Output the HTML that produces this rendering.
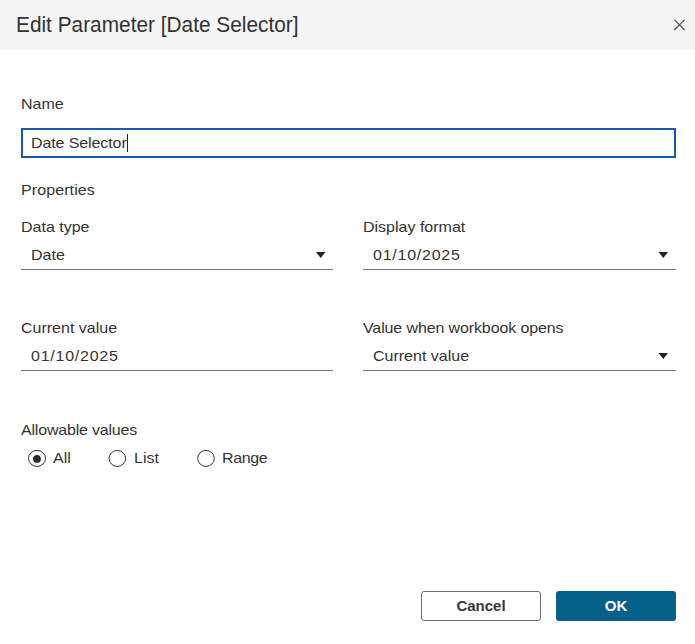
<!DOCTYPE html>
<html>
<head>
<meta charset="utf-8">
<style>
html,body{margin:0;padding:0;}
body{width:695px;height:644px;position:relative;overflow:hidden;background:#fff;font-family:"Liberation Sans",sans-serif;color:#333;}
.a{position:absolute;white-space:nowrap;line-height:20px;font-size:16px;transform:scaleY(0.95);transform-origin:0 0;}
.hdr{position:absolute;left:0;top:0;width:695px;height:50px;background:#f5f5f5;}
.title{left:15.5px;top:13px;font-size:22px;line-height:24px;color:#333;transform:scaleX(0.947);transform-origin:0 0;}
.dt{letter-spacing:0.75px;}
.ul{position:absolute;height:1px;background:#777;}
.tri{position:absolute;}
.radio{position:absolute;}
.btn{position:absolute;top:591px;width:120px;height:30px;box-sizing:border-box;border-radius:3px;font-weight:bold;font-size:15px;line-height:28px;text-align:center;}
</style>
</head>
<body>
<div class="hdr"></div>
<div class="a title">Edit Parameter [Date Selector]</div>
<svg style="position:absolute;left:673px;top:18px" width="13" height="13" viewBox="0 0 13 13"><path d="M1.3 1.6L11.7 12M11.7 1.6L1.3 12" stroke="#555" stroke-width="1.3" fill="none"/></svg>

<div class="a" style="left:21px;top:95px;">Name</div>
<div style="position:absolute;left:21px;top:128px;width:655px;height:30px;box-sizing:border-box;border:2px solid #165cab;"></div>
<div class="a" style="left:31px;top:134px;letter-spacing:-0.1px;">Date Selector</div>
<div style="position:absolute;left:127px;top:134px;width:1px;height:18px;background:#222;"></div>

<div class="a" style="left:21px;top:181px;letter-spacing:0.1px;">Properties</div>

<div class="a" style="left:21px;top:218px;">Data type</div>
<div class="a" style="left:31px;top:246px;">Date</div>
<svg class="tri" style="left:316px;top:252px" width="10" height="7" viewBox="0 0 10 7"><path d="M0 0H9.5L4.75 6Z" fill="#222"/></svg>
<div class="ul" style="left:21px;top:269px;width:312px;"></div>

<div class="a" style="left:363px;top:218px;">Display format</div>
<div class="a dt" style="left:373px;top:246px;">01/10/2025</div>
<svg class="tri" style="left:658px;top:252px" width="10" height="7" viewBox="0 0 10 7"><path d="M0.5 0H10L5.25 6Z" fill="#222"/></svg>
<div class="ul" style="left:363px;top:269px;width:313px;"></div>

<div class="a" style="left:21px;top:319px;">Current value</div>
<div class="a dt" style="left:31px;top:347px;">01/10/2025</div>
<div class="ul" style="left:21px;top:370px;width:312px;"></div>

<div class="a" style="left:363px;top:319px;letter-spacing:-0.12px;">Value when workbook opens</div>
<div class="a" style="left:373px;top:347px;">Current value</div>
<svg class="tri" style="left:658px;top:353px" width="10" height="7" viewBox="0 0 10 7"><path d="M0.5 0H10L5.25 6Z" fill="#222"/></svg>
<div class="ul" style="left:363px;top:370px;width:313px;"></div>

<div class="a" style="left:21px;top:421px;letter-spacing:-0.2px;">Allowable values</div>
<svg class="radio" style="left:27px;top:449px" width="20" height="19" viewBox="0 0 20 19"><ellipse cx="10" cy="9.4" rx="8.5" ry="8" fill="none" stroke="#333" stroke-width="1"/><circle cx="10" cy="9.9" r="3.9" fill="#2b2b2b"/></svg>
<div class="a" style="left:53px;top:449px;">All</div>
<svg class="radio" style="left:108px;top:449px" width="20" height="19" viewBox="0 0 20 19"><ellipse cx="9.3" cy="9.4" rx="8.3" ry="8" fill="none" stroke="#333" stroke-width="1"/></svg>
<div class="a" style="left:134px;top:449px;">List</div>
<svg class="radio" style="left:196px;top:449px" width="20" height="19" viewBox="0 0 20 19"><ellipse cx="10" cy="9.4" rx="8.3" ry="8" fill="none" stroke="#333" stroke-width="1"/></svg>
<div class="a" style="left:222px;top:449px;letter-spacing:-0.4px;">Range</div>

<div class="btn" style="left:421px;border:1px solid #707070;background:#fff;color:#383838;">Cancel</div>
<div class="btn" style="left:556px;background:#05608a;color:#fff;line-height:30px;">OK</div>
</body>
</html>
